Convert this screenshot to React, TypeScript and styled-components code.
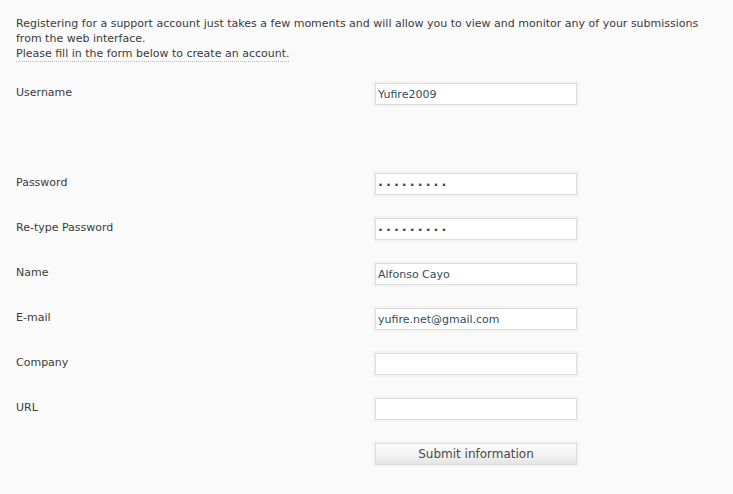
import React from "react";
import styled, { createGlobalStyle } from "styled-components";

const Global = createGlobalStyle`
  html, body {
    margin: 0;
    padding: 0;
    background: #fafafa;
  }
  body {
    font-family: "DejaVu Sans", Verdana, sans-serif;
    font-size: 11px;
    color: #3a3a3a;
  }
`;

const Page = styled.div`
  width: 733px;
  height: 494px;
  box-sizing: border-box;
  padding: 16px 16px 0 16px;
  background: #fafafa;
  overflow: hidden;
`;

const Intro = styled.p`
  margin: 0 0 22px 0;
  line-height: 15px;
  color: #3a3a3a;
`;

const Dotted = styled.span`
  border-bottom: 1px dotted #bbb;
  padding-bottom: 1px;
`;

const Form = styled.form`
  display: flex;
  flex-direction: column;
  gap: 23px;
`;

const Row = styled.div<{ $extra?: boolean }>`
  display: grid;
  grid-template-columns: 359px 202px;
  align-items: start;
  margin-bottom: ${(p) => (p.$extra ? "45px" : "0")};
`;

const Label = styled.label`
  line-height: 15px;
  padding-top: 2px;
  color: #3a3a3a;
`;

const Field = styled.input<{ $dots?: boolean }>`
  box-sizing: border-box;
  width: 202px;
  height: 22px;
  margin: 0;
  padding: 0 0 0 2px;
  border: 1px solid #dcdcdc;
  background: #fff;
  box-shadow: 0 0 0 2px #f3f3f3;
  font-family: "DejaVu Sans", Verdana, sans-serif;
  font-size: ${(p) => (p.$dots ? "13px" : "11px")};
  font-weight: ${(p) => (p.$dots ? "bold" : "normal")};
  letter-spacing: ${(p) => (p.$dots ? "3px" : "0")};
  color: ${(p) => (p.$dots ? "#444" : "#2e4f5c")};
  outline: none;
`;

const Submit = styled.button`
  box-sizing: border-box;
  width: 202px;
  height: 22px;
  margin: 0;
  padding: 0;
  border: 1px solid #dcdcdc;
  background: linear-gradient(#fdfdfd 0%, #f3f3f3 55%, #e4e4e4 100%);
  box-shadow: 0 0 0 2px #f3f3f3;
  font-family: "DejaVu Sans", Verdana, sans-serif;
  font-size: 12px;
  color: #484848;
  text-align: center;
`;

type F = { label: string; value: string; dots?: boolean; extra?: boolean };

const fields: F[] = [
  { label: "Username", value: "Yufire2009", extra: true },
  { label: "Password", value: "·········", dots: true },
  { label: "Re-type Password", value: "·········", dots: true },
  { label: "Name", value: "Alfonso Cayo" },
  { label: "E-mail", value: "yufire.net@gmail.com" },
  { label: "Company", value: "" },
  { label: "URL", value: "" },
];

export default function App() {
  return (
    <Page>
      <Global />
      <Intro>
        Registering for a support account just takes a few moments and will allow you to view and monitor any of your submissions from the web interface.
        <br />
        <Dotted>Please fill in the form below to create an account.</Dotted>
      </Intro>
      <Form onSubmit={(e) => e.preventDefault()}>
        {fields.map((f) => (
          <Row key={f.label} $extra={f.extra}>
            <Label>{f.label}</Label>
            <Field type="text" readOnly value={f.value} $dots={f.dots} />
          </Row>
        ))}
        <Row>
          <span />
          <Submit type="submit">Submit information</Submit>
        </Row>
      </Form>
    </Page>
  );
}
